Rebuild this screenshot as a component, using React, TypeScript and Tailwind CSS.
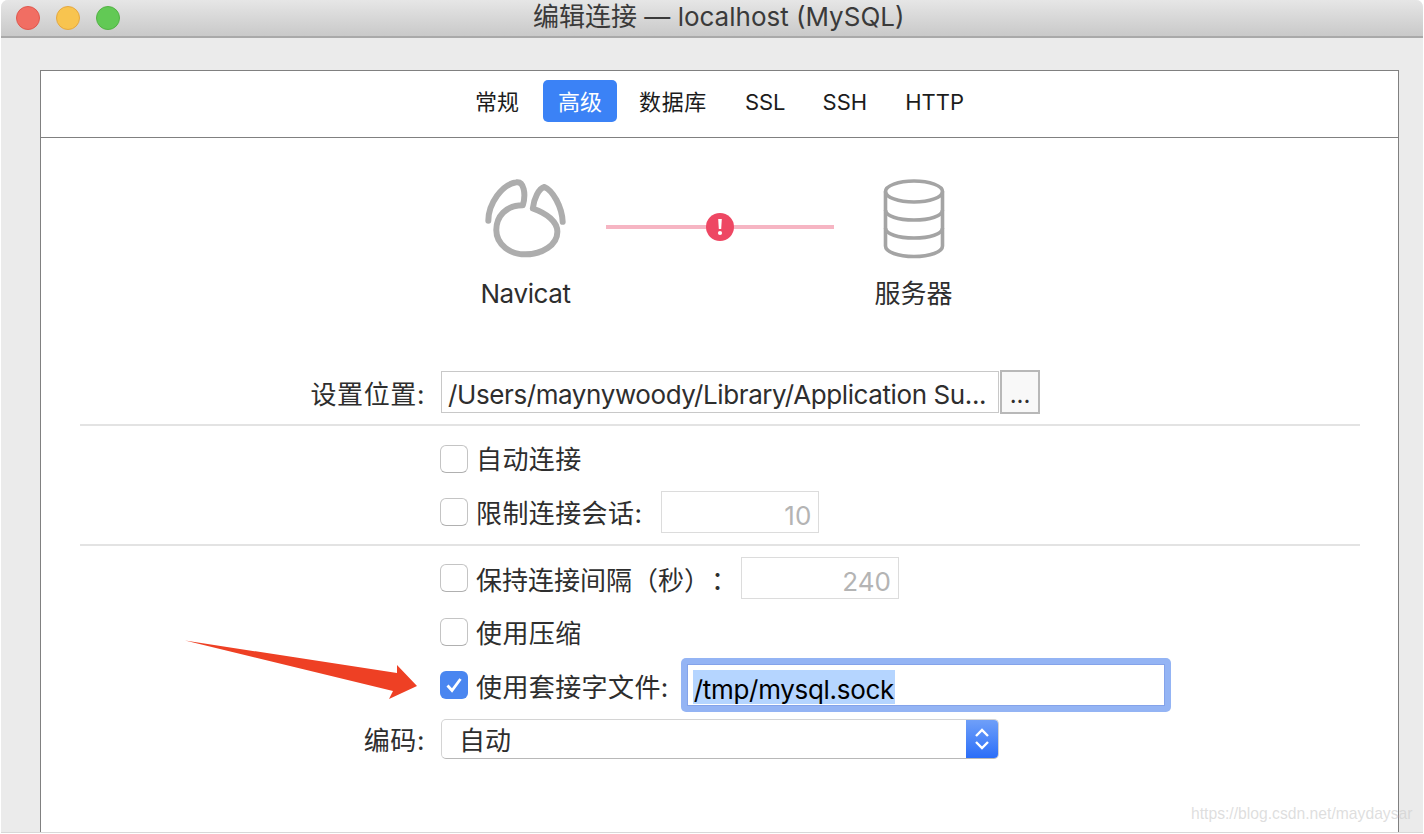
import React from 'react';

const Checkbox: React.FC<{ checked?: boolean }> = ({ checked }) =>
  checked ? (
    <span className="flex h-[28px] w-[28px] shrink-0 items-center justify-center rounded-[6px] bg-[#4a86f0]">
      <svg width="20" height="20" viewBox="0 0 20 20" fill="none">
        <path d="M3.5 10.5 L8 15.5 L16.5 4" stroke="#fff" strokeWidth="2.8" />
      </svg>
    </span>
  ) : (
    <span className="h-[28px] w-[28px] shrink-0 rounded-[6px] border border-[#c4c4c4] border-b-[#b0b0b0] bg-white" />
  );

const DisabledInput: React.FC<{ value: string }> = ({ value }) => (
  <div className="flex h-[42px] w-[158px] items-center justify-end border border-[#dcdcdc] pr-[7px] pt-[7px] text-[#b4b4b4]">
    {value}
  </div>
);

const NavicatIcon = () => (
  <svg width="87" height="83" viewBox="70 50 260 250" fill="none">
    <path
      d="M88 182 C88 130 130 72 172 66 C195 62 202 100 192 135 C140 135 112 170 112 210 C112 255 155 283 200 283 C250 283 296 255 296 215 C296 185 265 160 222 145 C225 115 240 85 257 80 C282 90 310 140 312 185"
      stroke="#adadad"
      strokeWidth="18"
      strokeLinecap="round"
      strokeLinejoin="round"
    />
  </svg>
);

const DatabaseIcon = () => (
  <svg width="62" height="80" viewBox="0 0 62 80" fill="none" stroke="#a4a4a4" strokeWidth="3.6">
    <ellipse cx="31" cy="12.5" rx="28.5" ry="10.5" />
    <path d="M2.5 12.5 V67 C2.5 73 15 77.5 31 77.5 C47 77.5 59.5 73 59.5 67 V12.5" />
    <path d="M2.5 31 C2.5 37 15 41 31 41 C47 41 59.5 37 59.5 31" />
    <path d="M2.5 49 C2.5 55 15 59 31 59 C47 59 59.5 55 59.5 49" />
  </svg>
);

export default function App() {
  return (
    <div className="relative h-[834px] w-[1424px] overflow-hidden bg-white font-['Inter','Noto_Sans_CJK_SC',sans-serif] text-[26px] leading-none text-[#2e2e2e]">
      <div className="ml-[1px] flex h-[833px] w-[1422px] flex-col rounded-t-[7px] border-b border-[#d8d8d8] bg-[#ebebeb]">
        {/* title bar */}
        <div className="flex h-[38px] shrink-0 items-center rounded-t-[7px] border-b-[2px] border-[#a9a9a9] bg-gradient-to-b from-[#e6e6e6] to-[#c9c9c9] pl-[15px]">
          <div className="flex gap-[16px]">
            <span className="h-[24px] w-[24px] rounded-full border border-[#e0584e] bg-[#f16e63]" />
            <span className="h-[24px] w-[24px] rounded-full border border-[#e5a840] bg-[#f8c44f]" />
            <span className="h-[24px] w-[24px] rounded-full border border-[#52b344] bg-[#62c955]" />
          </div>
          <div className="ml-[413px] pb-[2px] text-[#3a3a3a]">编辑连接 — localhost (MySQL)</div>
        </div>

        {/* panel */}
        <div className="ml-[39px] mt-[32px] flex w-[1359px] flex-1 flex-col border-x border-t border-[#808080] bg-white">
          <div className="flex h-[67px] shrink-0 items-center justify-center gap-[8px] border-b border-[#808080] pb-[6px] text-[22px] text-[#1c1c1c]">
            <div className="mr-[1px] flex h-[42px] items-center px-[15px] pt-[1px]">常规</div>
            <div className="flex h-[42px] items-center rounded-[5px] bg-[#3b82f6] px-[15px] pt-[1px] text-white">高级</div>
            <div className="-ml-[1px] flex h-[42px] items-center px-[15px] pt-[1px] tracking-[0.6px]">数据库</div>
            <div className="flex h-[42px] items-center px-[15px] pt-[1px]">SSL</div>
            <div className="-ml-[1px] flex h-[42px] items-center px-[15px] pt-[1px]">SSH</div>
            <div className="flex h-[42px] items-center px-[15px] pt-[1px]">HTTP</div>
          </div>

          {/* connection diagram */}
          <div className="mt-[39px] flex justify-center">
            <div className="flex w-[160px] flex-col items-center">
              <NavicatIcon />
              <div className="mt-[21px] tracking-[-0.4px]">Navicat</div>
            </div>
            <div className="relative mt-[48px] h-[4px] w-[228px] bg-[#f6b5c3]">
              <div className="absolute left-[100px] top-[-12px] flex h-[28px] w-[28px] items-center justify-center rounded-full bg-[#ee4763]">
                <svg width="6" height="18" viewBox="0 0 6 18" fill="#fff">
                  <path d="M1.2 1 H4.8 L4.2 11 H1.8 Z" />
                  <circle cx="3" cy="15" r="2.1" />
                </svg>
              </div>
            </div>
            <div className="flex w-[160px] flex-col items-center pt-[2px]">
              <DatabaseIcon />
              <div className="mt-[22px]">服务器</div>
            </div>
          </div>

          {/* settings location */}
          <div className="mt-[63px] flex h-[44px] items-center">
            <div className="w-[384px] pt-[6px] text-right tracking-[0.6px]">设置位置:</div>
            <div className="ml-[16px] flex h-[42px] w-[558px] items-center whitespace-nowrap border border-[#c8c8c8] pl-[6px] pt-[6px] tracking-[-0.4px]">
              /Users/maynywoody/Library/Application Su...
            </div>
            <div className="ml-[1px] flex h-[44px] w-[40px] items-center justify-center border-[2px] border-[#b8b8b8] bg-[#f8f8f8] pt-[6px] text-[24px]">
              ...
            </div>
          </div>

          <div className="ml-[39px] mr-[38px] mt-[10px] h-[2px] bg-[#e3e3e3]" />

          <div className="mt-[19px] flex h-[28px] items-center gap-[8px] pl-[399px]">
            <Checkbox />
            <span className="pt-[2px] tracking-[0.4px]">自动连接</span>
          </div>
          <div className="mt-[18px] flex h-[42px] items-center pl-[399px]">
            <Checkbox />
            <span className="ml-[8px] pt-[4px] tracking-[0.4px]">限制连接会话:</span>
            <div className="ml-[19px]">
              <DisabledInput value="10" />
            </div>
          </div>

          <div className="ml-[39px] mr-[38px] mt-[11px] h-[2px] bg-[#e3e3e3]" />

          <div className="mt-[11px] flex h-[42px] items-center pl-[399px]">
            <Checkbox />
            <span className="ml-[8px] w-[265px] whitespace-nowrap pt-[5px]">
              {'保持连接间隔\uFF08秒\uFF09'}
              <span className="ml-[14px]">{'\uFF1A'}</span>
            </span>
            <DisabledInput value="240" />
          </div>
          <div className="mt-[19px] flex h-[28px] items-center gap-[8px] pl-[399px]">
            <Checkbox />
            <span className="pt-[4px] tracking-[0.4px]">使用压缩</span>
          </div>
          <div className="mt-[12px] flex h-[54px] items-center pl-[399px]">
            <Checkbox checked />
            <span className="ml-[8px] pt-[5px] tracking-[0.4px]">使用套接字文件:</span>
            <div className="ml-[12px] h-[54px] w-[490px] rounded-[5px] bg-[#94b4f4] p-[6px]">
              <div className="flex h-[42px] items-end border border-[#84a3ea] bg-white pb-[1px] pl-[5px]">
                <span className="flex h-[34px] items-center bg-[#b5d5ff] pl-[1px] pr-[1px] pt-[5px] tracking-[-0.3px] text-black">/tmp/mysql.sock</span>
              </div>
            </div>
          </div>
          <div className="mt-[7px] flex h-[40px] items-center">
            <div className="w-[384px] pt-[4px] text-right tracking-[0.6px]">编码:</div>
            <div className="ml-[16px] flex h-[40px] w-[558px] overflow-hidden rounded-[5px] border border-[#d4d4d4] border-b-[#b8b8b8]">
              <div className="flex flex-1 items-center pl-[17px] pt-[4px]">自动</div>
              <div className="flex w-[32px] items-center justify-center bg-gradient-to-b from-[#6f9ff8] to-[#2a6df8]">
                <svg width="18" height="28" viewBox="0 0 18 28" fill="none" stroke="#fff" strokeWidth="2.4">
                  <path d="M3 11 L9 5 L15 11" />
                  <path d="M3 17 L9 23 L15 17" />
                </svg>
              </div>
            </div>
          </div>
        </div>
      </div>

      {/* red annotation arrow */}
      <svg className="absolute left-[180px] top-[635px]" width="245" height="70" viewBox="180 635 245 70">
        <polygon points="185,640.5 397,673 397,665 417,686 389,699 393,691" fill="#ee4024" />
      </svg>

      {/* csdn watermark */}
      <div className="absolute left-[1191px] top-[805px] font-['Liberation_Sans',sans-serif] text-[15.7px] leading-[18px] text-[#d0d0d0]/70">
        https://blog.csdn.net/maydaysar
      </div>
    </div>
  );
}
